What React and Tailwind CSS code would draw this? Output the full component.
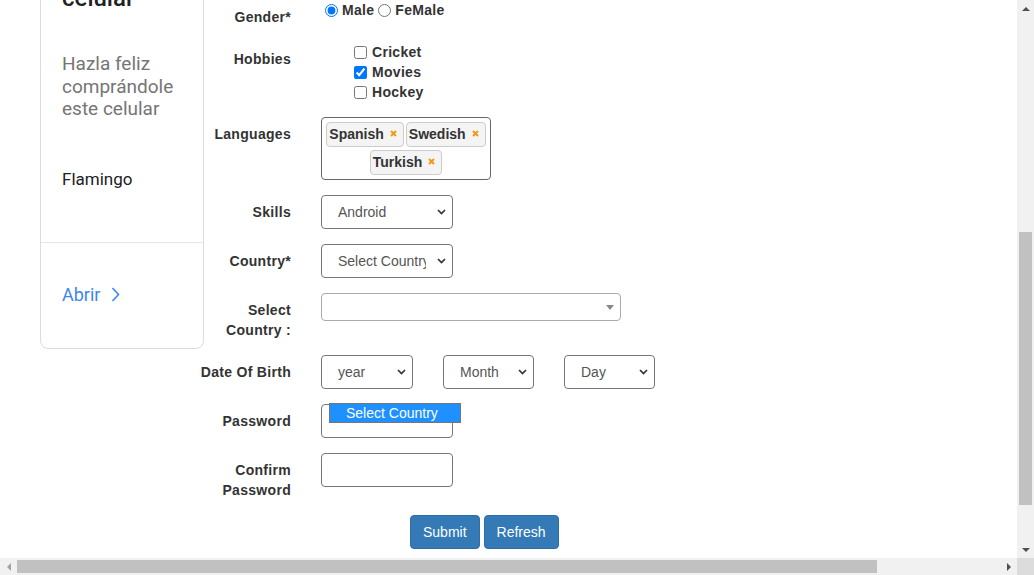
import React from 'react'

const LABEL = 'font-bold text-[14px] leading-[20px] text-[#333] tracking-[0.3px] text-right whitespace-nowrap'

function Row({ label, children, className = '' }) {
  return (
    <div className={`flex mb-[15px] ${className}`}>
      <div className="w-[102px] shrink-0 flex justify-end pr-[15px] pt-[7px]">
        <div className={LABEL}>{label}</div>
      </div>
      <div className="pl-[15px]">{children}</div>
    </div>
  )
}

function Chevron() {
  return (
    <svg width="9" height="6" viewBox="0 0 9 6" className="absolute right-[6px] top-[13px]">
      <polyline points="1,1 4.5,4.5 8,1" fill="none" stroke="#333" strokeWidth="1.7" />
    </svg>
  )
}

function Select({ value, w = 'w-[132px]' }) {
  return (
    <div className={`${w} h-[34px] border border-[#767676] rounded-[4px] relative flex items-center pl-[16px] pr-[26px] text-[14px] text-[#555] whitespace-nowrap`}>
      <span className="overflow-hidden">{value}</span>
      <Chevron />
    </div>
  )
}

function Tag({ text }) {
  return (
    <div className="h-[25px] border border-[#ccc] rounded-[4px] bg-[#f4f4f4] flex items-center pl-[2px] pr-[6px] text-[14px] font-bold text-[#333]">
      {text}
      <svg width="7" height="7" viewBox="0 0 7 7" className="ml-[6px] -mt-[3px]">
        <path d="M1 1 L6 6 M6 1 L1 6" stroke="#f39a12" strokeWidth="2" />
      </svg>
    </div>
  )
}

function Card() {
  return (
    <div className="ml-[40px] w-[164px] shrink-0 -mt-[32px] border border-[#dadce0] rounded-[8px] font-['Roboto',sans-serif]">
      <div className="pl-[21px] pr-[10px] pt-[15px] pb-[51px] border-b border-[#e6e6e6]">
        <div className="text-[24px] leading-[28px] font-medium text-[#202124]">celular</div>
        <div className="mt-[41px] text-[19px] leading-[22.5px] text-[#757575]">
          Hazla feliz<br />comprándole<br />este celular
        </div>
        <div className="mt-[46px] text-[17px] leading-[24px] text-[#202124]">Flamingo</div>
      </div>
      <div className="pl-[21px] pt-[40px] pb-[41px] flex items-center gap-[11px] text-[#3b87f0] text-[18px] leading-[24px]">
        Abrir
        <svg width="9" height="15" viewBox="0 0 9 15">
          <polyline points="1.5,1 7.5,7.5 1.5,14" fill="none" stroke="#3b87f0" strokeWidth="1.6" />
        </svg>
      </div>
    </div>
  )
}

function Form() {
  return (
    <div className="text-[14px] text-[#333]">
      <Row label="Gender*">
        <div className="flex items-center h-[20px] font-bold tracking-[0.3px]">
          <input type="radio" name="g" defaultChecked className="m-0 ml-[4px] mr-[4px] w-[13px] h-[13px]" />
          <span>Male</span>
          <input type="radio" name="g" className="m-0 ml-[4px] mr-[4px] w-[13px] h-[13px]" />
          <span>FeMale</span>
        </div>
      </Row>
      <Row label="Hobbies">
        <div className="pl-[33px] font-bold tracking-[0.3px]">
          {[['Cricket', false], ['Movies', true], ['Hockey', false]].map(([h, c]) => (
            <div key={h} className="flex items-center h-[20px]">
              <input type="checkbox" defaultChecked={c} className="m-0 mr-[5px] w-[13px] h-[13px]" />
              <span>{h}</span>
            </div>
          ))}
        </div>
      </Row>
      <Row label="Languages">
        <div className="w-[170px] border border-[#666] rounded-[4px] px-[2px] pt-[4px] pb-[4px] flex flex-wrap justify-center gap-x-[2px] gap-y-[3px]">
          <Tag text="Spanish" />
          <Tag text="Swedish" />
          <Tag text="Turkish" />
        </div>
      </Row>
      <Row label="Skills">
        <Select value="Android" />
      </Row>
      <Row label="Country*">
        <Select value="Select Country" />
      </Row>
      <Row label={<>Select<br />Country :</>}>
        <div className="w-[300px] h-[28px] border border-[#aaa] rounded-[4px] relative">
          <div className="absolute right-[6px] top-[11px] border-x-[4px] border-x-transparent border-t-[5px] border-t-[#888]" />
        </div>
      </Row>
      <Row label="Date Of Birth">
        <div className="flex gap-[30px]">
          <Select value="year" w="w-[92px]" />
          <Select value="Month" w="w-[91px]" />
          <Select value="Day" w="w-[91px]" />
        </div>
      </Row>
      <Row label="Password">
        <div className="relative">
          <div className="w-[132px] h-[34px] border border-[#767676] rounded-[4px]" />
          <div className="absolute left-[8px] -top-[1px] w-[132px] h-[20px] bg-[#1e90ff] border border-[#767676] text-white text-[14px] leading-[18px] pl-[16px] whitespace-nowrap">
            Select Country
          </div>
        </div>
      </Row>
      <Row label={<>Confirm<br />Password</>}>
        <div className="w-[132px] h-[34px] border border-[#767676] rounded-[4px]" />
      </Row>
      <div className="flex gap-[4px] ml-[206px]">
        <button className="h-[34px] px-[12px] border border-[#2e6da4] bg-[#337ab7] rounded-[4px] text-white text-[14px] leading-[20px]">Submit</button>
        <button className="h-[34px] px-[12px] border border-[#2e6da4] bg-[#337ab7] rounded-[4px] text-white text-[14px] leading-[20px]">Refresh</button>
      </div>
    </div>
  )
}

function VScroll() {
  return (
    <div className="w-[17px] shrink-0 bg-[#f1f1f1] flex flex-col">
      <div className="h-[17px] flex items-center justify-center">
        <div className="border-x-[4px] border-x-transparent border-b-[4px] border-b-[#505050]" />
      </div>
      <div className="h-[215px]" />
      <div className="h-[273px] mx-[2px] bg-[#c1c1c1]" />
      <div className="flex-1" />
      <div className="h-[17px] flex items-center justify-center">
        <div className="border-x-[4px] border-x-transparent border-t-[4px] border-t-[#505050]" />
      </div>
    </div>
  )
}

function HScroll() {
  return (
    <div className="h-[17px] shrink-0 flex bg-[#f1f1f1]">
      <div className="w-[17px] flex items-center justify-center">
        <div className="border-y-[4px] border-y-transparent border-r-[4px] border-r-[#a3a3a3]" />
      </div>
      <div className="flex-1 py-[2px]">
        <div className="w-[860px] h-full bg-[#c1c1c1]" />
      </div>
      <div className="w-[17px] flex items-center justify-center">
        <div className="border-y-[4px] border-y-transparent border-l-[4px] border-l-[#505050]" />
      </div>
      <div className="w-[17px] bg-[#dcdcdc]" />
    </div>
  )
}

export default function App() {
  return (
    <div className="w-[1034px] h-[575px] overflow-hidden flex flex-col bg-white font-['Liberation_Sans',Arial,sans-serif]">
      <div className="flex flex-1 min-h-0">
        <div className="flex-1 flex items-start overflow-hidden">
          <Card />
          <Form />
        </div>
        <VScroll />
      </div>
      <HScroll />
    </div>
  )
}
